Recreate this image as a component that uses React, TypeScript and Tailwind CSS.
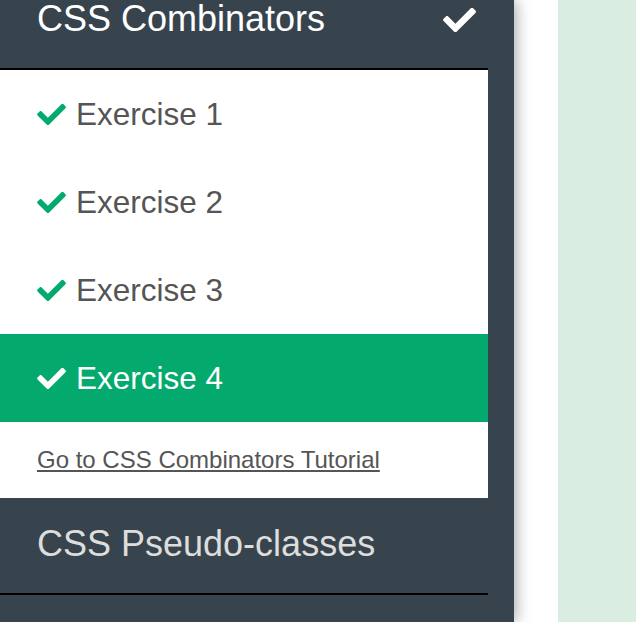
import React from "react";

const CheckIcon = ({ className }: { className?: string }) => (
  <svg viewBox="0 69 512 374" className={className} fill="currentColor" aria-hidden="true">
    <path d="M173.898 439.404l-166.4-166.4c-9.997-9.997-9.997-26.206 0-36.204l36.203-36.204c9.997-9.998 26.207-9.998 36.204 0L192 312.69 432.095 72.596c9.997-9.997 26.207-9.997 36.204 0l36.203 36.204c9.997 9.997 9.997 26.206 0 36.204l-294.4 294.401c-9.998 9.997-26.207 9.997-36.204-.001z" />
  </svg>
);

const exercises = [
  { label: "Exercise 1", active: false },
  { label: "Exercise 2", active: false },
  { label: "Exercise 3", active: false },
  { label: "Exercise 4", active: true },
];

export default function App() {
  return (
    <div
      className="flex h-[622px] w-full overflow-hidden bg-white"
      style={{ fontFamily: '"Liberation Sans", Arial, sans-serif' }}
    >
      <aside className="relative z-10 w-[514px] shrink-0 bg-[#38444d] pr-[26px] shadow-[2px_0_14px_rgba(0,0,0,0.35)]">
        <div className="flex h-[68px] items-start justify-between pl-[37px] pr-[12px]">
          <span className="text-[36px] leading-[37px] text-white">CSS Combinators</span>
          <CheckIcon className="mt-[8px] h-[24px] w-[33px] text-white" />
        </div>
        <div className="h-[2px] bg-black" />
        <div className="bg-white">
          {exercises.map((ex) => (
            <div
              key={ex.label}
              className={
                ex.active
                  ? "flex h-[88px] items-center gap-[10px] bg-[#04AA6D] pl-[37px] text-white"
                  : "flex h-[88px] items-center gap-[10px] pl-[37px] text-[#555555]"
              }
            >
              <CheckIcon
                className={
                  ex.active
                    ? "h-[21px] w-[29px] text-white"
                    : "h-[21px] w-[29px] text-[#04AA6D]"
                }
              />
              <span className="text-[31.5px] leading-[34px]">{ex.label}</span>
            </div>
          ))}
          <div className="pl-[37px] pt-[26px] pb-[23px]">
            <a href="#" className="text-[24px] leading-[24px] text-[#555555] underline">
              Go to CSS Combinators Tutorial
            </a>
          </div>
        </div>
        <div className="pl-[37px] pt-[28px] pb-[31px]">
          <span className="block text-[36px] leading-[36px] text-[#dddddd]">CSS Pseudo-classes</span>
        </div>
        <div className="h-[2px] bg-black" />
      </aside>
      <div className="w-[44px] shrink-0 bg-white" />
      <main className="flex-1 bg-[#d9eee1]" />
    </div>
  );
}
